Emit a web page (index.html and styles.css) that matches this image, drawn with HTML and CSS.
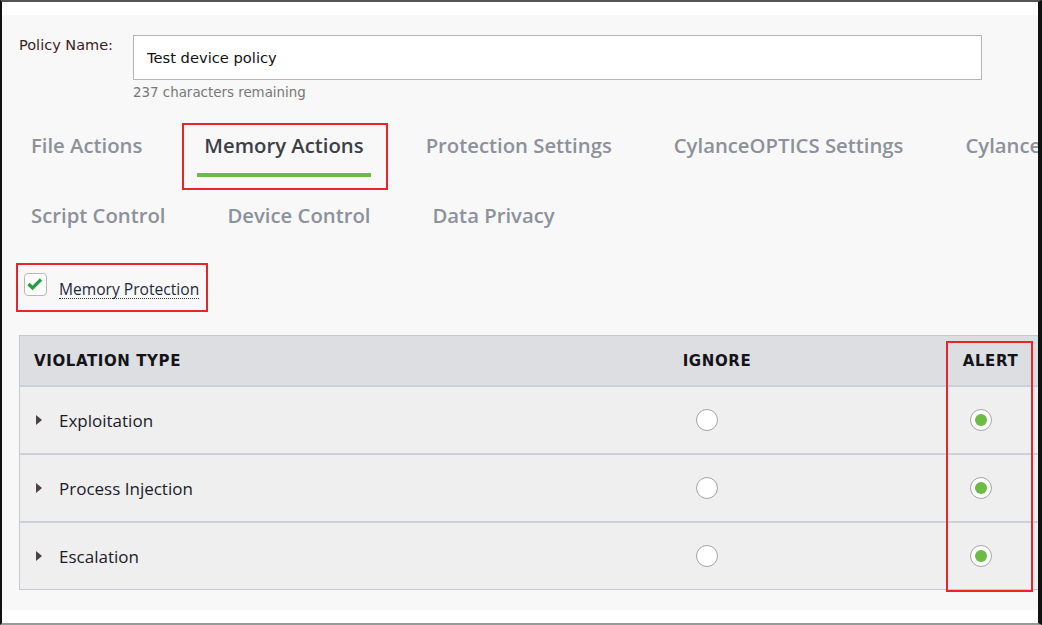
FILE: index.html
```html
<!DOCTYPE html>
<html lang="en">
<head>
  <meta charset="UTF-8" />
  <title>Device Policy - Memory Actions</title>
  <link rel="stylesheet" href="styles.css">
</head>
<body>
  <div class="frame">
    <div class="panel">
      <div class="name-row">
        <label class="name-label" for="policyName">Policy Name:</label>
        <div class="name-field">
          <input type="text" id="policyName" class="name-input" value="Test device policy" />
          <div class="remaining">237 characters remaining</div>
        </div>
      </div>

      <div class="tabs">
        <div class="tab">File Actions</div>
        <div class="tab active outlined">Memory Actions</div>
        <div class="tab">Protection Settings</div>
        <div class="tab">CylanceOPTICS Settings</div>
        <div class="tab">Cylance</div>
        <div class="tab">Script Control</div>
        <div class="tab">Device Control</div>
        <div class="tab">Data Privacy</div>
      </div>

      <div class="protect-toggle outlined">
        <span class="check-box">
          <svg width="16" height="13" viewBox="0 0 16 13"><path d="M1.5 6 L5.5 10 L14 1.5" fill="none" stroke="#2a9d47" stroke-width="3.2"/></svg>
        </span>
        <span class="toggle-label">Memory Protection</span>
      </div>

      <div class="table">
        <div class="row head">
          <div class="cell type">VIOLATION TYPE</div>
          <div class="cell opt">IGNORE</div>
          <div class="cell opt">ALERT</div>
        </div>
        <div class="row">
          <div class="cell type"><span class="caret"></span>Exploitation</div>
          <div class="cell opt"><span class="radio"></span></div>
          <div class="cell opt"><span class="radio on"></span></div>
        </div>
        <div class="row">
          <div class="cell type"><span class="caret"></span>Process Injection</div>
          <div class="cell opt"><span class="radio"></span></div>
          <div class="cell opt"><span class="radio on"></span></div>
        </div>
        <div class="row">
          <div class="cell type"><span class="caret"></span>Escalation</div>
          <div class="cell opt"><span class="radio"></span></div>
          <div class="cell opt"><span class="radio on"></span></div>
        </div>
        <div class="alert-outline"></div>
      </div>
    </div>
  </div>
</body>
</html>
```

FILE: styles.css
```css
body {
  margin: 0;
  background: #fff;
  font-family: 'DejaVu Sans', Verdana, sans-serif;
}

.frame {
  width: 1036px;
  height: 621px;
  border-top: 2px solid #555;
  border-left: 2px solid #111;
  border-right: 4px solid #111;
  border-bottom: 2px solid #999;
  overflow: hidden;
  background: #fff;
}

.panel {
  margin-top: 13px;
  height: 595px;
  background: #f8f8f8;
  padding: 20px 0 0 17px;
  box-sizing: border-box;
  position: relative;
}

.name-row {
  display: flex;
  gap: 16px;
}

.name-label {
  font-size: 14.5px;
  color: #3a1f1f;
  padding-top: 2px;
  width: 98px;
}

.name-input {
  display: block;
  width: 849px;
  height: 45px;
  box-sizing: border-box;
  border: 1px solid #b5b5b5;
  background: #fff;
  padding: 0 13px;
  font-family: 'DejaVu Sans', Verdana, sans-serif;
  font-size: 14.7px;
  color: #111;
  outline: none;
}

.remaining {
  font-size: 13.4px;
  line-height: 16px;
  color: #777;
  margin-top: 5px;
}

.tabs {
  width: 1180px;
  display: flex;
  flex-wrap: wrap;
  column-gap: 48px;
  margin-top: 22px;
  margin-left: 5px;
}

.tab {
  font-family: 'Open Sans', sans-serif;
  font-weight: 600;
  font-size: 20.3px;
  line-height: 28px;
  color: #8c919c;
  padding: 8px 7px 0;
  height: 70px;
  box-sizing: border-box;
  position: relative;
}

.tab.active {
  color: #3c3f48;
}

.tab.active::after {
  content: "";
  position: absolute;
  left: 0;
  right: 0;
  bottom: 16px;
  height: 4px;
  background: #6cbb45;
}

.tab.outlined::before {
  content: "";
  position: absolute;
  left: -15px;
  right: -17px;
  top: 0;
  bottom: 3px;
  border: 2px solid #e8262a;
}

.protect-toggle {
  display: inline-flex;
  align-items: flex-start;
  gap: 12px;
  padding: 8px 7px 11px 6px;
  margin-left: -3px;
}

.protect-toggle.outlined {
  border: 2px solid #e8262a;
}

.check-box {
  width: 23px;
  height: 23px;
  border: 1px solid #b8b8b8;
  border-radius: 4px;
  background: #fff;
  display: flex;
  align-items: center;
  justify-content: flex-start;
  padding: 0 0 1px 2px;
  box-sizing: border-box;
}

.toggle-label {
  font-family: 'Open Sans', sans-serif;
  font-size: 15.6px;
  color: #1d2b3c;
  border-bottom: 1px dotted #333;
  line-height: 18px;
  margin-top: 7px;
}

.table {
  width: 1040px;
  margin-top: 23px;
  border: 1px solid #c6c9cf;
  position: relative;
}

.row {
  display: grid;
  grid-template-columns: 493px 408px 139px;
  height: 66px;
  align-items: center;
  background: #efefef;
  border-top: 2px solid #cdd0d8;
}

.row.head {
  height: 49px;
  background: #dcdee2;
  border-top: none;
}

.cell {
  font-family: 'Open Sans', sans-serif;
  font-size: 17px;
  color: #1b1b2a;
}

.head .cell {
  font-family: 'DejaVu Sans', Verdana, sans-serif;
  font-weight: bold;
  font-size: 15px;
  letter-spacing: 0.6px;
  color: #141418;
}

.cell.type {
  padding-left: 14px;
  display: flex;
  align-items: center;
}

.cell.opt {
  display: flex;
  justify-content: center;
}

.caret {
  width: 0;
  height: 0;
  border-top: 5px solid transparent;
  border-bottom: 5px solid transparent;
  border-left: 6px solid #4a4242;
  margin: 0 17px 0 2px;
}

.radio {
  width: 20px;
  height: 20px;
  border-radius: 50%;
  border: 1px solid #a5a5a5;
  background: #fff;
  display: flex;
  align-items: center;
  justify-content: center;
  margin-right: 20px;
}

.radio.on::after {
  content: "";
  width: 12px;
  height: 12px;
  border-radius: 50%;
  background: #6cbb45;
}

.alert-outline {
  position: absolute;
  left: 926px;
  width: 83px;
  top: 5px;
  bottom: -3px;
  border: 2px solid #e8262a;
}
```
